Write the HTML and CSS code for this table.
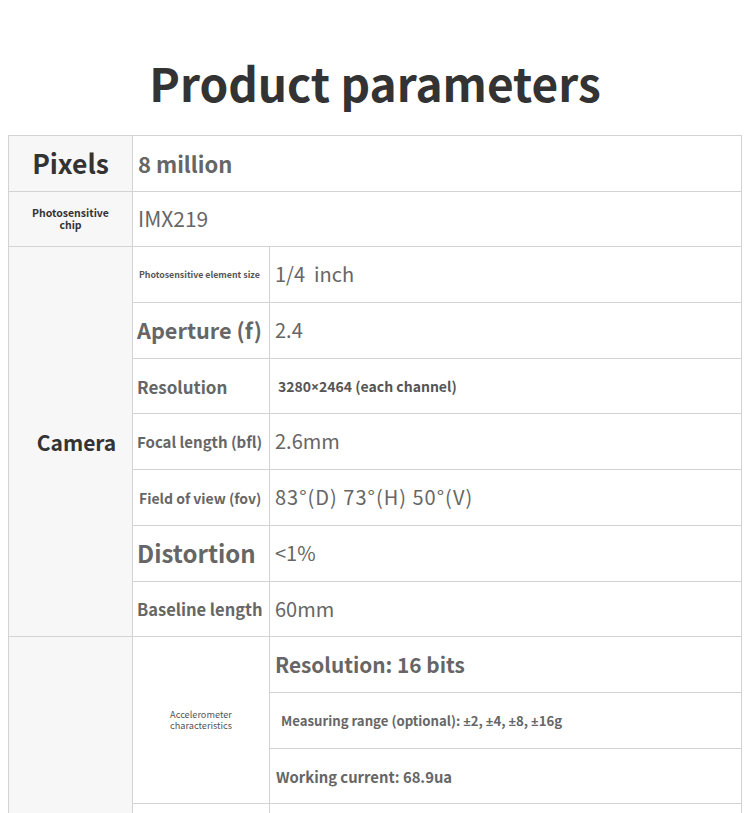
FILE: index.html
```html
<!DOCTYPE html>
<html lang="en">
<head>
<meta charset="utf-8">
<title>Product parameters</title>
<link rel="stylesheet" href="styles.css">
</head>
<body>
<h1 class="title">Product parameters</h1>
<div class="table">
  <div class="cell head c1 r1 s-pixels">Pixels</div>
  <div class="cell val wide r1 v-bold">8 million</div>

  <div class="cell head c1 r2 s-chip"><span>Photosensitive<br>chip</span></div>
  <div class="cell val wide r2 v-imx">IMX219</div>

  <div class="cell head c1 camera s-camera">Camera</div>
  <div class="cell lab l-tiny">Photosensitive element size</div>
  <div class="cell val v-reg">1/4&nbsp; inch</div>
  <div class="cell lab l-aperture">Aperture (f)</div>
  <div class="cell val v-reg">2.4</div>
  <div class="cell lab l-res">Resolution</div>
  <div class="cell val v-res"><span>3280<span class="sym">×</span>2464 (each channel)</span></div>
  <div class="cell lab l-focal">Focal length (bfl)</div>
  <div class="cell val v-reg">2.6mm</div>
  <div class="cell lab l-fov">Field of view (fov)</div>
  <div class="cell val v-reg v-fov">83°(D) 73°(H) 50°(V)</div>
  <div class="cell lab l-dist">Distortion</div>
  <div class="cell val v-reg">&lt;1%</div>
  <div class="cell lab l-base">Baseline length</div>
  <div class="cell val v-reg">60mm</div>

  <div class="cell head c1 imu"></div>
  <div class="cell lab accel"><span>Accelerometer<br>characteristics</span></div>
  <div class="cell val v-bits">Resolution: 16 bits</div>
  <div class="cell val v-range"><span>Measuring range (optional): <span class="sym">±</span>2, <span class="sym">±</span>4, <span class="sym">±</span>8, <span class="sym">±</span>16g</span></div>
  <div class="cell val v-current">Working current: 68.9ua</div>
  <div class="cell lab"></div>
  <div class="cell val"></div>
</div>
</body>
</html>
```

FILE: styles.css
```css
html, body {
  margin: 0;
  padding: 0;
  background: #ffffff;
}

body {
  font-family: "Noto Sans CJK SC", "Noto Sans", sans-serif;
  color: #666666;
  overflow: hidden;
}

.title {
  margin: 0;
  padding-top: 52px;
  height: 60px;
  line-height: 60px;
  margin-bottom: 23px;
  text-align: center;
  font-size: 46px;
  font-weight: 700;
  color: #333333;
}

.table {
  margin-left: 8px;
  width: 734px;
  box-sizing: border-box;
  display: grid;
  grid-template-columns: 124px 137px 472px;
  grid-template-rows: 56px 55px 56px 56px 55px 56px 56px 56px 55px 56px 56px 55px 56px;
  border-top: 1px solid #d3d3d3;
  border-left: 1px solid #d3d3d3;
}

.cell {
  box-sizing: border-box;
  border-right: 1px solid #d3d3d3;
  border-bottom: 1px solid #d3d3d3;
  display: flex;
  align-items: center;
  white-space: nowrap;
}

.head {
  background: #f7f7f7;
  justify-content: center;
  text-align: center;
  color: #333333;
  font-weight: 700;
}

.c1 { grid-column: 1; }
.r1 { grid-row: 1; }
.r2 { grid-row: 2; }
.wide { grid-column: 2 / 4; }
.camera { grid-row: 3 / 10; padding-left: 12px; }
.imu { grid-row: 10 / 14; }

.s-pixels { font-size: 26.5px; padding-bottom: 2px; }
.s-chip { font-size: 10.5px; line-height: 12px; }
.s-camera { font-size: 21px; }

.lab {
  grid-column: 2;
  padding-left: 4px;
  font-weight: 700;
  color: #666666;
}

.val {
  padding-left: 5px;
  color: #666666;
}

.sym {
  font-family: "Noto Sans", "DejaVu Sans", sans-serif;
}

.v-bold { font-size: 22px; font-weight: 700; padding-bottom: 2px; }
.v-imx { font-size: 21px; font-weight: 400; padding-bottom: 2px; }
.v-reg { font-size: 20px; font-weight: 400; padding-bottom: 2px; }
.v-fov { letter-spacing: 1px; }
.v-res { font-size: 14px; font-weight: 700; padding-left: 8px; color: #555555; }
.v-bits { font-size: 20.8px; font-weight: 700; padding-bottom: 2px; }
.v-range { font-size: 13.2px; font-weight: 700; padding-left: 11px; }
.v-current { font-size: 14.8px; font-weight: 700; padding-left: 6px; }

.l-tiny { font-size: 8.8px; padding-left: 6px; color: #555555; }
.l-aperture { font-size: 21.7px; padding-bottom: 2px; }
.l-res { font-size: 17px; }
.l-focal { font-size: 15px; }
.l-fov { font-size: 14px; padding-left: 6px; }
.l-dist { font-size: 24px; padding-bottom: 2px; }
.l-base { font-size: 16.5px; }

.accel {
  grid-row: 10 / 13;
  justify-content: center;
  text-align: center;
  padding-left: 0;
  font-size: 9.2px;
  line-height: 11px;
  font-weight: 400;
  color: #555555;
}
```
